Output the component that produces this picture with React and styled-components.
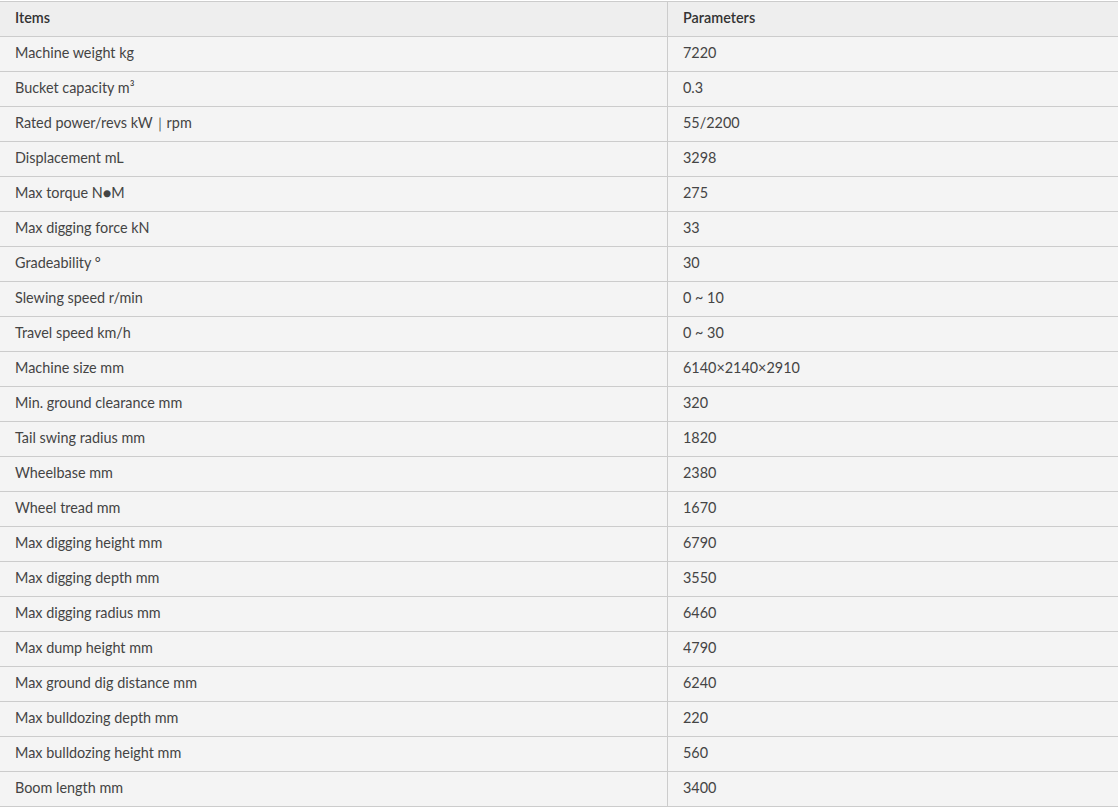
import React from "react";
import styled, { createGlobalStyle } from "styled-components";

const rows = [
  ["Machine weight kg", "7220"],
  ["Bucket capacity m³", "0.3"],
  ["Rated power/revs kW｜rpm", "55/2200"],
  ["Displacement mL", "3298"],
  ["Max torque N●M", "275"],
  ["Max digging force kN", "33"],
  ["Gradeability °", "30"],
  ["Slewing speed r/min", "0 ~ 10"],
  ["Travel speed km/h", "0 ~ 30"],
  ["Machine size mm", "6140×2140×2910"],
  ["Min. ground clearance mm", "320"],
  ["Tail swing radius mm", "1820"],
  ["Wheelbase mm", "2380"],
  ["Wheel tread mm", "1670"],
  ["Max digging height mm", "6790"],
  ["Max digging depth mm", "3550"],
  ["Max digging radius mm", "6460"],
  ["Max dump height mm", "4790"],
  ["Max ground dig distance mm", "6240"],
  ["Max bulldozing depth mm", "220"],
  ["Max bulldozing height mm", "560"],
  ["Boom length mm", "3400"],
];

const GlobalStyle = createGlobalStyle`
  body {
    margin: 0;
    background: #ffffff;
    font-family: Lato, "Open Sans", sans-serif;
  }
`;

const Wrap = styled.div`
  padding-top: 1px;
`;

const Table = styled.table`
  width: 100%;
  border-collapse: collapse;
  font-size: 14.4px;
  line-height: 18px;
  color: #444;
`;

const Cell = styled.td`
  padding: 7px 15px 9px;
  border-top: 1px solid #cccccc;
  border-bottom: 1px solid #cccccc;
  background: ${(p) => (p.$head ? "#eeeeee" : "#f4f4f4")};
  color: ${(p) => (p.$head ? "#333" : "#444")};
  font-weight: ${(p) => (p.$head ? 600 : 400)};
  text-align: left;
  vertical-align: middle;
  &:first-child {
    width: 637px;
  }
  &:last-child {
    border-left: 1px solid #cccccc;
  }
`;

const App = () => {
  return (
    <Wrap>
      <GlobalStyle />
      <Table>
        <thead>
          <tr>
            <Cell as="th" $head>Items</Cell>
            <Cell as="th" $head>Parameters</Cell>
          </tr>
        </thead>
        <tbody>
          {rows.map(([item, value]) => (
            <tr key={item}>
              <Cell>{item}</Cell>
              <Cell>{value}</Cell>
            </tr>
          ))}
        </tbody>
      </Table>
    </Wrap>
  );
};

export default App;
